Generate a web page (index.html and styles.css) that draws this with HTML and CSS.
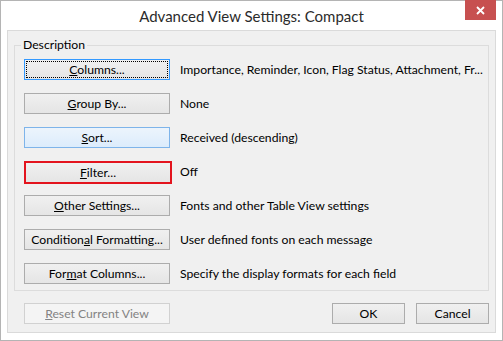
FILE: index.html
```html
<!DOCTYPE html>
<html lang="en">
<head>
<meta charset="UTF-8" />
<title>Advanced View Settings: Compact</title>
<link rel="stylesheet" href="styles.css">
</head>
<body>

<div class="window">
  <div class="titlebar">
    <span></span>
    <p class="title">Advanced View Settings: Compact</p>
    <button class="close" title="Close">
      <svg width="9" height="9" viewBox="0 0 9 9"><path d="M1 1 L8 8 M8 1 L1 8" stroke="#fff" stroke-width="1.8" fill="none"/></svg>
    </button>
  </div>

  <div class="client">
    <fieldset class="group">
      <legend>Description</legend>

      <div class="row">
        <button class="btn focused"><u>C</u>olumns...</button>
        <span class="desc">Importance, Reminder, Icon, Flag Status, Attachment, Fr...</span>
      </div>
      <div class="row">
        <button class="btn"><u>G</u>roup By...</button>
        <span class="desc">None</span>
      </div>
      <div class="row">
        <button class="btn hover"><u>S</u>ort...</button>
        <span class="desc">Received (descending)</span>
      </div>
      <div class="row">
        <button class="btn marked"><u>F</u>ilter...</button>
        <span class="desc">Off</span>
      </div>
      <div class="row">
        <button class="btn"><u>O</u>ther Settings...</button>
        <span class="desc">Fonts and other Table View settings</span>
      </div>
      <div class="row">
        <button class="btn">Condition<u>a</u>l Formatting...</button>
        <span class="desc">User defined fonts on each message</span>
      </div>
      <div class="row">
        <button class="btn">For<u>m</u>at Columns...</button>
        <span class="desc">Specify the display formats for each field</span>
      </div>
    </fieldset>

    <div class="footer">
      <button class="btn" disabled><u>R</u>eset Current View</button>
      <div class="actions">
        <button class="btn small">OK</button>
        <button class="btn small">Cancel</button>
      </div>
    </div>
  </div>
</div>

</body>
</html>
```

FILE: styles.css
```css
body {
  margin: 0;
  font-family: Lato, "Noto Sans", sans-serif;
  font-size: 12.2px;
  color: #000;
}
.window {
  width: 503px;
  height: 341px;
  box-sizing: border-box;
  border: 1px solid #b4b4b4;
  background-color: white;
  display: flex;
  flex-direction: column;
}
.titlebar {
  height: 29px;
  display: grid;
  grid-template-columns: 1fr auto 1fr;
}
.title {
  margin: 0;
  font-size: 15px;
  line-height: 30px;
  color: #2b2b2b;
  white-space: nowrap;
}
.close {
  justify-self: end;
  align-self: start;
  width: 31px;
  height: 20px;
  margin: -1px 6px 0 0;
  border: none;
  padding: 0;
  background-color: #c75050;
  display: flex;
  justify-content: center;
  align-items: center;
}
.client {
  flex: 1;
  margin: 0 6px 7px 6px;
  border: 1px solid #dadada;
  background-color: #f0f0f0;
  padding: 6px 6px 7px 6px;
  display: flex;
  flex-direction: column;
}
.group {
  margin: 0;
  border: 1px solid #dcdcdc;
  padding: 6px 0 6px 9px;
  display: flex;
  flex-direction: column;
  gap: 13px;
}
.group legend {
  padding: 0 2px;
  margin-left: -3px;
  line-height: 16px;
}
.row {
  height: 21px;
  display: flex;
  align-items: center;
  gap: 10px;
}
.desc {
  white-space: nowrap;
}
.btn {
  width: 146px;
  height: 21px;
  padding: 0;
  border: 1px solid #acacac;
  background: linear-gradient(#f0f0f0, #e5e5e5);
  font-family: inherit;
  font-size: 12.2px;
  color: #000;
  white-space: nowrap;
}
.btn.focused {
  border-color: #3399ff;
  outline: 1px dotted #000;
  outline-offset: -3px;
}
.btn.hover {
  border-color: #7eb4ea;
  background: linear-gradient(#ecf4fc, #dcecfc);
}
.btn.marked {
  width: 148px;
  height: 23px;
  border: 2px solid #e3141e;
  margin-right: -2px;
  align-self: flex-start;
}
.btn:disabled {
  border-color: #d1d1d1;
  background: #f4f4f4;
  color: #838383;
}
.footer {
  margin-top: 12px;
  padding-left: 10px;
  display: flex;
  justify-content: space-between;
}
.actions {
  display: flex;
  gap: 11px;
}
.btn.small {
  width: 73px;
}
```
